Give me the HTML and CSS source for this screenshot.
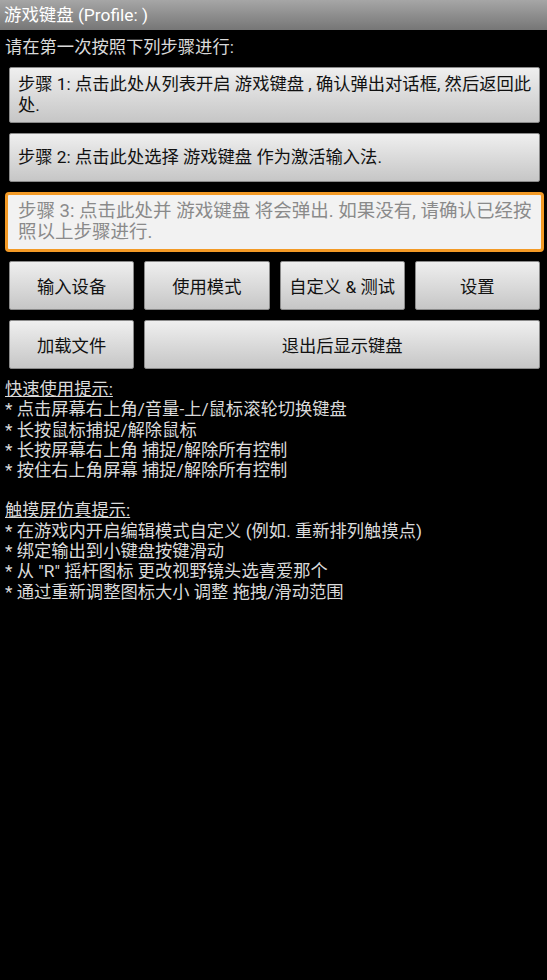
FILE: index.html
```html
<!DOCTYPE html>
<html lang="zh-CN">
<head>
    <meta charset="utf-8">
    <meta name="viewport" content="width=device-width, initial-scale=1.0">
    <title>游戏键盘</title>
    <link rel="stylesheet" href="styles.css">
</head>
<body>
    <div class="title-bar">游戏键盘 (Profile: )</div>

    <div class="content">
        <p class="intro">请在第一次按照下列步骤进行:</p>

        <div class="steps">
            <button class="step">步骤 1: 点击此处从列表开启 游戏键盘 , 确认弹出对话框, 然后返回此处.</button>
            <button class="step">步骤 2: 点击此处选择 游戏键盘 作为激活输入法.</button>
            <button class="step step-focused">步骤 3: 点击此处并 游戏键盘 将会弹出. 如果没有, 请确认已经按照以上步骤进行.</button>
        </div>

        <div class="menu-grid">
            <button class="menu-btn">输入设备</button>
            <button class="menu-btn">使用模式</button>
            <button class="menu-btn">自定义 &amp; 测试</button>
            <button class="menu-btn">设置</button>
            <button class="menu-btn">加载文件</button>
            <button class="menu-btn wide">退出后显示键盘</button>
        </div>

        <div class="tips">
            <p class="tips-title">快速使用提示:</p>
            <p>* 点击屏幕右上角/音量-上/鼠标滚轮切换键盘</p>
            <p>* 长按鼠标捕捉/解除鼠标</p>
            <p>* 长按屏幕右上角 捕捉/解除所有控制</p>
            <p>* 按住右上角屏幕 捕捉/解除所有控制</p>
        </div>

        <div class="tips">
            <p class="tips-title">触摸屏仿真提示:</p>
            <p>* 在游戏内开启编辑模式自定义 (例如. 重新排列触摸点)</p>
            <p>* 绑定输出到小键盘按键滑动</p>
            <p>* 从 "R" 摇杆图标 更改视野镜头选喜爱那个</p>
            <p>* 通过重新调整图标大小 调整 拖拽/滑动范围</p>
        </div>
    </div>
</body>
</html>
```

FILE: styles.css
```css
body {
    margin: 0;
    background: #000;
    font-family: Roboto, "Noto Sans CJK SC", sans-serif;
    color: #dadada;
}

.title-bar {
    height: 30px;
    line-height: 30px;
    padding: 0 4px;
    font-size: 17.4px;
    color: #fff;
    background: linear-gradient(to bottom, #a6a6a6, #767676);
}

.content {
    padding: 4px 7px 0 5px;
}

.intro {
    margin: 0 0 7px;
    font-size: 17.3px;
    line-height: 26px;
}

.steps {
    display: flex;
    flex-direction: column;
    gap: 10px;
    padding: 0 0 0 4px;
}

button {
    font-family: Roboto, "Noto Sans CJK SC", sans-serif;
    font-size: 17.3px;
    color: #111;
    border: 1px solid #8a8a8a;
    border-radius: 2px;
    background: linear-gradient(to bottom, #efefef, #c6c6c6);
    cursor: pointer;
}

.step {
    min-height: 49px;
    padding: 6px 3px 6px 8px;
    line-height: 21px;
    text-align: left;
}

/* the step that currently has focus gets the orange ring */
.step-focused {
    margin: 0 -4px;
    padding: 6px 8px 6px 10px;
    border: 3px solid #f39a26;
    border-radius: 4px;
    background: #f2f2f2;
    color: #8a8a8a;
    font-size: 18.5px;
}

.menu-grid {
    display: grid;
    grid-template-columns: repeat(4, 1fr);
    gap: 10px;
    margin: 9px 0 0 4px;
}

.menu-btn {
    height: 49px;
    text-align: center;
}

.menu-btn.wide {
    grid-column: span 3;
}

.tips {
    margin: 10px 0 20px;
    font-size: 17.3px;
    line-height: 20.3px;
}

.tips p {
    margin: 0;
}

.tips-title {
    text-decoration: underline;
}
```
